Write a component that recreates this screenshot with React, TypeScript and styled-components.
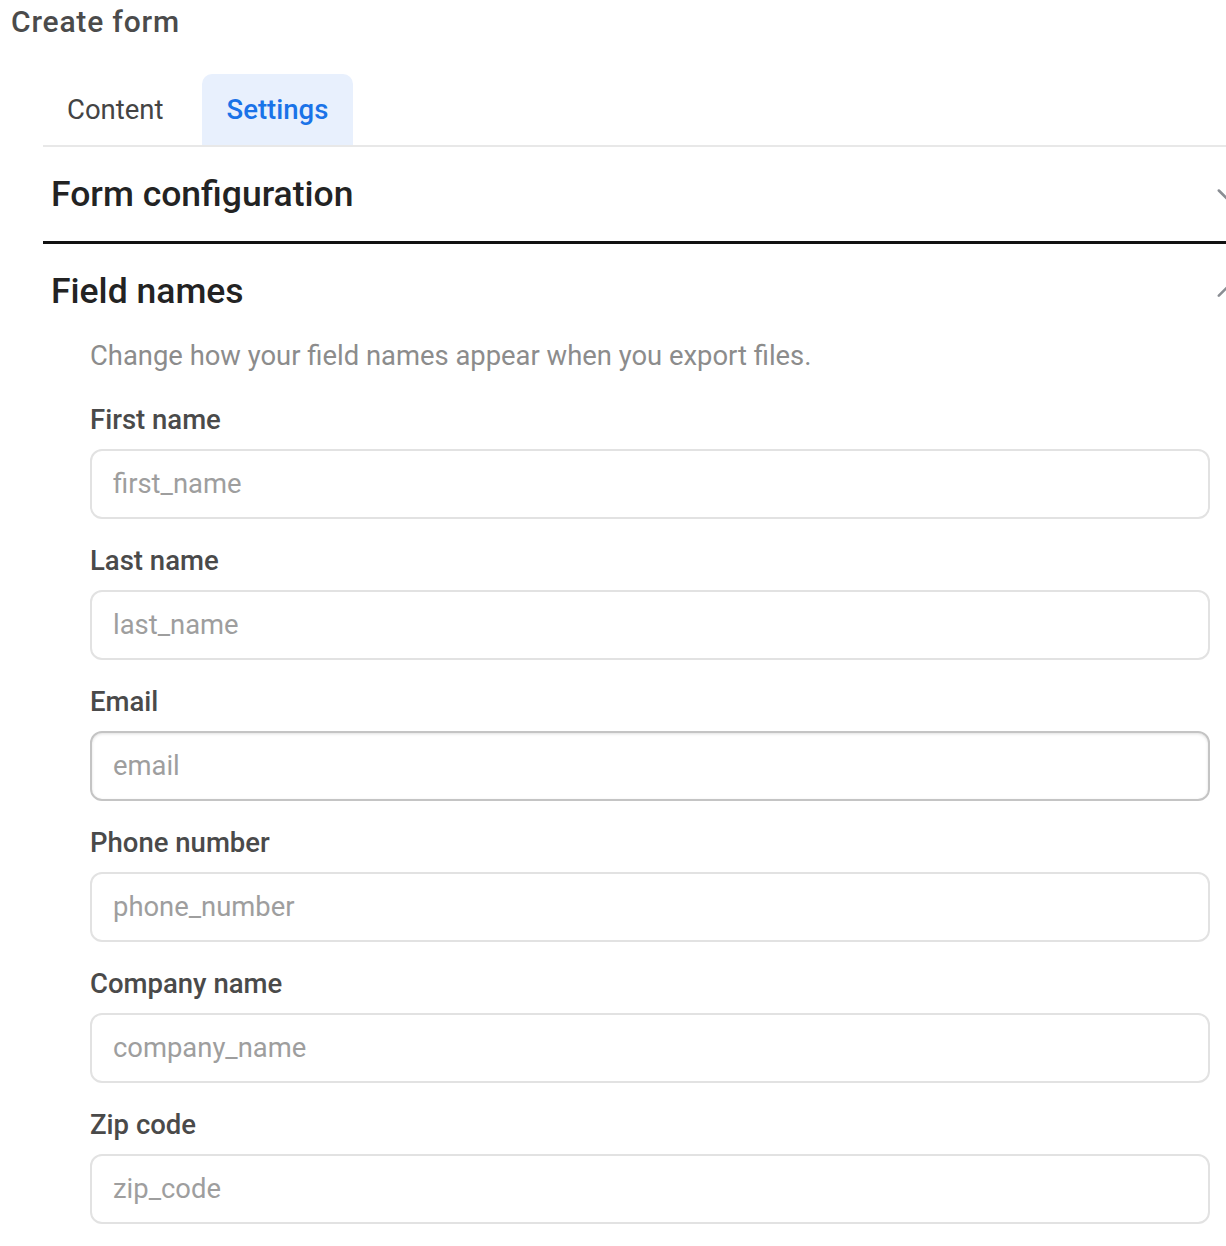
import React from "react";
import styled, { createGlobalStyle } from "styled-components";

const fields = [
  { label: "First name", placeholder: "first_name" },
  { label: "Last name", placeholder: "last_name" },
  { label: "Email", placeholder: "email", active: true },
  { label: "Phone number", placeholder: "phone_number" },
  { label: "Company name", placeholder: "company_name" },
  { label: "Zip code", placeholder: "zip_code" },
];

const Chevron = ({ up }: { up?: boolean }) => (
  <svg width="28" height="28" viewBox="0 0 24 24" fill="none">
    <path
      d={up ? "M5 16l7-7 7 7" : "M5 9l7 7 7-7"}
      stroke="#8a8d93"
      strokeWidth="2.2"
      strokeLinecap="round"
      strokeLinejoin="round"
    />
  </svg>
);

const App = () => {
  return (
    <>
      <GlobalStyle />
      <Page>
        <Title>Create form</Title>

        <Body>
          <Tabs>
            <Tab>Content</Tab>
            <Tab $active>Settings</Tab>
          </Tabs>

          <Section $open={false}>
            <SectionHeader>
              <SectionTitle>Form configuration</SectionTitle>
              <Chevron />
            </SectionHeader>
          </Section>

          <Section $open>
            <SectionHeader>
              <SectionTitle>Field names</SectionTitle>
              <Chevron up />
            </SectionHeader>

            <SectionContent>
              <Description>
                Change how your field names appear when you export files.
              </Description>

              {fields.map((f) => (
                <Field key={f.label}>
                  <Label>{f.label}</Label>
                  <Input placeholder={f.placeholder} $active={f.active} />
                </Field>
              ))}
            </SectionContent>
          </Section>
        </Body>
      </Page>
    </>
  );
};

export default App;

const GlobalStyle = createGlobalStyle`
  html, body {
    margin: 0;
    padding: 0;
    background: #ffffff;
    overflow: hidden;
  }
  body {
    font-family: Roboto, "Liberation Sans", Arial, sans-serif;
  }
`;

const Page = styled.div`
  width: 1257px;
  padding: 4px 0 0 0;
`;

const Title = styled.h1`
  margin: 0 0 0 11px;
  font-size: 30px;
  line-height: 36px;
  letter-spacing: 0.8px;
  font-weight: 500;
  color: #4b4b4b;
`;

const Body = styled.div`
  margin: 34px 0 0 43px;
`;

const Tabs = styled.div`
  display: flex;
  align-items: stretch;
  gap: 14px;
  border-bottom: 2px solid #e8e8e8;
`;

const Tab = styled.div<{ $active?: boolean }>`
  height: 71px;
  display: flex;
  align-items: center;
  padding: 0 ${({ $active }) => ($active ? "25px" : "24px")};
  border-radius: 10px 10px 0 0;
  font-size: 27.5px;
  font-weight: ${({ $active }) => ($active ? 500 : 400)};
  color: ${({ $active }) => ($active ? "#1a73e8" : "#444444")};
  background: ${({ $active }) => ($active ? "#e8f0fd" : "transparent")};
`;

const Section = styled.div<{ $open?: boolean }>`
  border-bottom: ${({ $open }) => ($open ? "none" : "3px solid #111111")};
`;

const SectionHeader = styled.div`
  height: 94px;
  display: flex;
  align-items: center;
  justify-content: space-between;
  padding: 0 16px 0 8px;
`;

const SectionTitle = styled.h2`
  margin: 0;
  font-size: 35.5px;
  font-weight: 500;
  color: #232323;
`;

const SectionContent = styled.div`
  padding: 0 47px;
`;

const Description = styled.p`
  margin: 0 0 31px;
  font-size: 27.4px;
  line-height: 36px;
  color: #8c8c8c;
`;

const Field = styled.div`
  display: flex;
  flex-direction: column;
  gap: 14px;
  margin-bottom: 27px;
`;

const Label = styled.label`
  font-size: 27.5px;
  line-height: 30px;
  font-weight: 500;
  color: #4a4a4a;
`;

const Input = styled.input<{ $active?: boolean }>`
  box-sizing: border-box;
  height: 70px;
  width: 100%;
  padding: 0 21px;
  border-radius: 12px;
  border: 2px solid ${({ $active }) => ($active ? "#c4c4c4" : "#e2e2e2")};
  box-shadow: ${({ $active }) =>
    $active ? "inset 0 1px 3px rgba(0,0,0,0.12)" : "none"};
  font-family: Roboto, "Liberation Sans", Arial, sans-serif;
  font-size: 27.4px;
  color: #333;
  outline: none;

  &::placeholder {
    color: #9e9e9e;
  }
`;
